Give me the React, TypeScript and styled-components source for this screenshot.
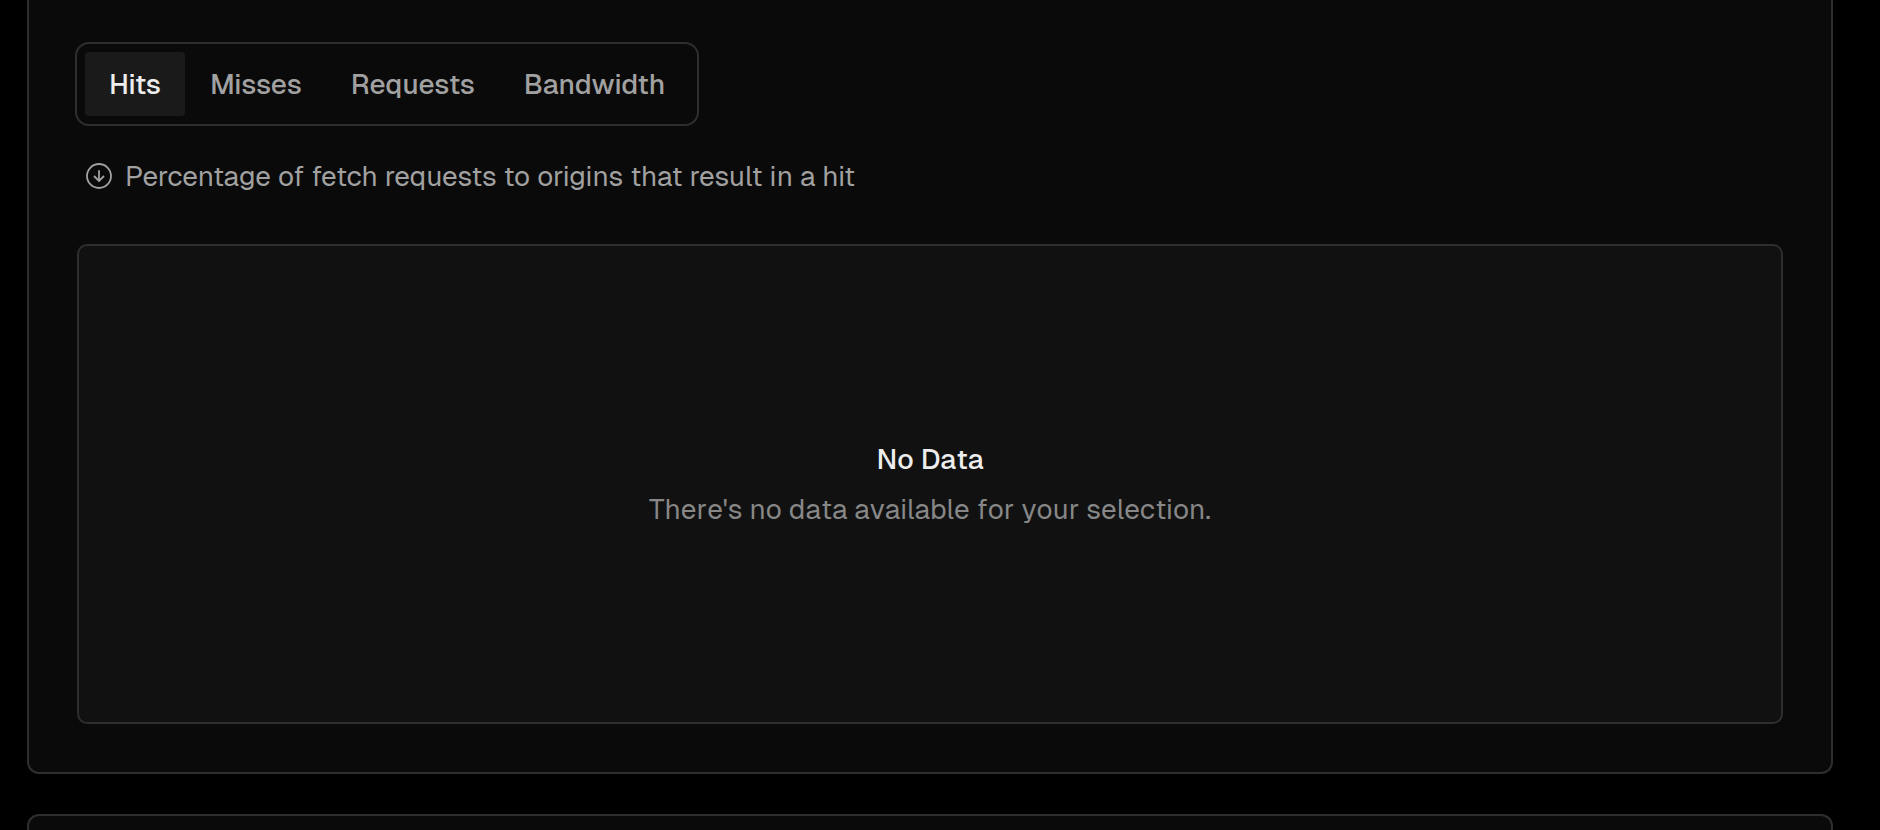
import { useState } from "react";
import styled, { createGlobalStyle } from "styled-components";

const GlobalStyle = createGlobalStyle`
  *, *::before, *::after { box-sizing: border-box; }
  body {
    margin: 0;
    background: #000;
    color: #ededed;
    font-family: Geist, Inter, "Liberation Sans", sans-serif;
    font-size: 28px;
    line-height: 40px;
  }
`;

const Page = styled.main`
  display: flex;
  flex-direction: column;
  gap: 40px;
  min-height: 100vh;
  padding: 0 47px 0 27px;
`;

const Card = styled.section<{ $edge: "top" | "bottom" }>`
  background: #0a0a0a;
  border: 2px solid #2e2e2e;
  ${({ $edge }) =>
    $edge === "top"
      ? "border-top: 0; border-radius: 0 0 12px 12px; padding: 42px 48px 48px 46px;"
      : "border-bottom: 0; border-radius: 12px 12px 0 0; flex: 1;"}
`;

const TabList = styled.div`
  display: flex;
  gap: 1px;
  width: fit-content;
  padding: 8px;
  border: 2px solid #2e2e2e;
  border-radius: 14px;
`;

const Tab = styled.button<{ $active: boolean }>`
  height: 64px;
  padding: 0 24px;
  border: 0;
  border-radius: 4px;
  background: ${({ $active }) => ($active ? "#1a1a1a" : "transparent")};
  color: ${({ $active }) => ($active ? "#ededed" : "#a1a1a1")};
  font: inherit;
  font-weight: 500;
  cursor: pointer;
`;

const Description = styled.p`
  display: flex;
  align-items: center;
  gap: 12px;
  margin: 30px 0 48px;
  padding-left: 10px;
  color: #a1a1a1;
`;

const Icon = styled.svg`
  flex: none;
  width: 28px;
  height: 28px;
`;

const EmptyState = styled.div`
  display: flex;
  flex-direction: column;
  align-items: center;
  justify-content: center;
  gap: 10px;
  min-height: 480px;
  margin-left: 2px;
  border: 2px solid #2e2e2e;
  border-radius: 10px;
  background: #111;
  font-kerning: none;
  text-align: center;
`;

const EmptyTitle = styled.h2`
  margin: 0;
  color: #ededed;
  font-size: inherit;
  font-weight: 500;
`;

const EmptyText = styled.p`
  margin: 0;
  color: #878787;
`;

const tabs = ["Hits", "Misses", "Requests", "Bandwidth"];

export default function App() {
  const [active, setActive] = useState("Hits");

  return (
    <>
      <GlobalStyle />
      <Page>
        <Card $edge="top">
          <TabList role="tablist">
            {tabs.map((name) => (
              <Tab
                key={name}
                type="button"
                role="tab"
                aria-selected={name === active}
                $active={name === active}
                onClick={() => setActive(name)}
              >
                {name}
              </Tab>
            ))}
          </TabList>
          <Description>
            <Icon viewBox="0 0 28 28" fill="none" stroke="currentColor" strokeWidth="1.8" aria-hidden="true">
              <circle cx="14" cy="14" r="12" />
              <path d="M14 8.3v10.4M9 14l5 4.9 5-4.9" />
            </Icon>
            Percentage of fetch requests to origins that result in a hit
          </Description>
          <EmptyState>
            <EmptyTitle>No Data</EmptyTitle>
            <EmptyText>There's no data available for your selection.</EmptyText>
          </EmptyState>
        </Card>
        <Card $edge="bottom" />
      </Page>
    </>
  );
}
